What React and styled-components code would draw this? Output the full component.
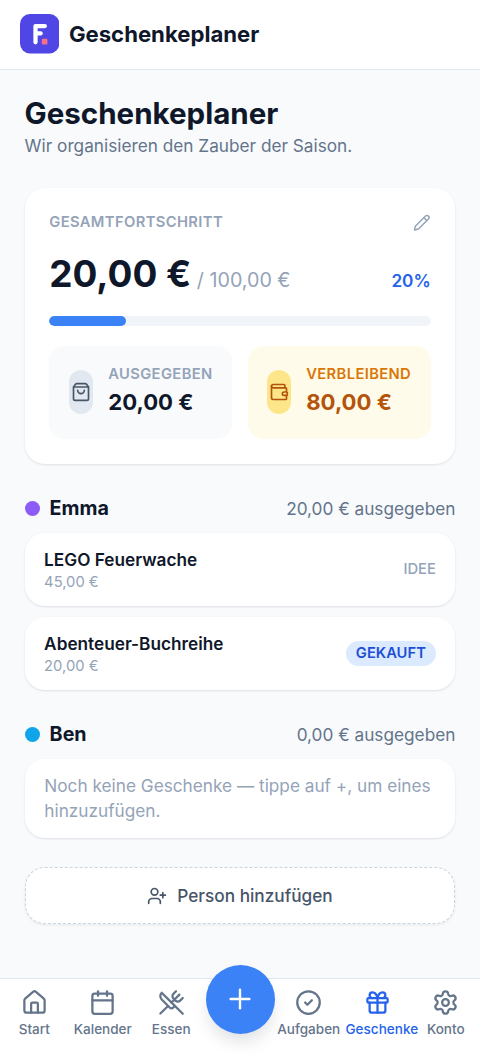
import styled, { createGlobalStyle } from "styled-components";
import {
  Calendar,
  CircleCheck,
  Gift,
  House,
  Pencil,
  Plus,
  Settings,
  ShoppingBag,
  UserPlus,
  UtensilsCrossed,
  Wallet,
} from "lucide-react";

const people = [
  {
    name: "Emma",
    color: "#8b5cf6",
    spent: "20,00 €",
    gifts: [
      { title: "LEGO Feuerwache", price: "45,00 €", status: "Idee", bought: false },
      { title: "Abenteuer-Buchreihe", price: "20,00 €", status: "Gekauft", bought: true },
    ],
  },
  { name: "Ben", color: "#0ea5e9", spent: "0,00 €", gifts: [] },
];

const Logo = () => (
  <LogoSvg viewBox="0 0 32 32">
    <rect width="32" height="32" rx="8" fill="#4f46e5" />
    <path d="M12.6 23V9.8H20.2M12.6 15.8H16.8" fill="none" stroke="#fff" strokeWidth="3.5" strokeLinecap="round" strokeLinejoin="round" />
    <rect x="17.7" y="20.2" width="4.6" height="4.6" rx="0.9" fill="#f6708a" />
  </LogoSvg>
);

const NavLink = ({ icon: Icon, label, active }) => (
  <NavItem $active={active}>
    <Icon strokeWidth={2} />
    <NavLabel>{label}</NavLabel>
  </NavItem>
);

const App = () => {
  const percent = 20;

  return (
    <>
      <GlobalStyle />
      <Page>
        <Header>
          <Logo />
          <HeaderTitle>Geschenkeplaner</HeaderTitle>
        </Header>
        <Main>
          <Title>Geschenkeplaner</Title>
          <Subtitle>Wir organisieren den Zauber der Saison.</Subtitle>

          <Summary>
            <Row>
              <Label>Gesamtfortschritt</Label>
              <EditButton aria-label="Budget bearbeiten">
                <Pencil strokeWidth={2} />
              </EditButton>
            </Row>
            <Amounts>
              <div>
                <Total>20,00 €</Total>
                <Budget> / 100,00 €</Budget>
              </div>
              <Percent>{percent}%</Percent>
            </Amounts>
            <Track>
              <Fill style={{ width: `${percent}%` }} />
            </Track>
            <Stats>
              <Stat>
                <StatIcon>
                  <ShoppingBag strokeWidth={2} />
                </StatIcon>
                <div>
                  <StatLabel>Ausgegeben</StatLabel>
                  <StatValue>20,00 €</StatValue>
                </div>
              </Stat>
              <Stat $warm>
                <StatIcon $warm>
                  <Wallet strokeWidth={2} />
                </StatIcon>
                <div>
                  <StatLabel $warm>Verbleibend</StatLabel>
                  <StatValue $warm>80,00 €</StatValue>
                </div>
              </Stat>
            </Stats>
          </Summary>

          {people.map((person) => (
            <Person key={person.name}>
              <PersonHeader>
                <PersonName $color={person.color}>{person.name}</PersonName>
                <Spent>{person.spent} ausgegeben</Spent>
              </PersonHeader>
              {person.gifts.length > 0 ? (
                person.gifts.map((gift) => (
                  <GiftCard key={gift.title}>
                    <div>
                      <GiftTitle>{gift.title}</GiftTitle>
                      <GiftPrice>{gift.price}</GiftPrice>
                    </div>
                    <Status $bought={gift.bought}>{gift.status}</Status>
                  </GiftCard>
                ))
              ) : (
                <Empty>Noch keine Geschenke — tippe auf +, um eines hinzuzufügen.</Empty>
              )}
            </Person>
          ))}

          <AddPerson>
            <UserPlus strokeWidth={2} />
            Person hinzufügen
          </AddPerson>
        </Main>
        <Nav>
          <NavLink icon={House} label="Start" />
          <NavLink icon={Calendar} label="Kalender" />
          <NavLink icon={UtensilsCrossed} label="Essen" />
          <AddButton aria-label="Hinzufügen">
            <Plus strokeWidth={1.8} />
          </AddButton>
          <NavLink icon={CircleCheck} label="Aufgaben" />
          <NavLink icon={Gift} label="Geschenke" active />
          <NavLink icon={Settings} label="Konto" />
        </Nav>
      </Page>
    </>
  );
};

const GlobalStyle = createGlobalStyle`
  * {
    box-sizing: border-box;
  }
  html {
    font-size: 19.692px;
  }
  body {
    margin: 0;
    background: #f8fafc;
    color: #0f172a;
    font-family: Inter, "Liberation Sans", sans-serif;
  }
  h1, h2, p {
    margin: 0;
  }
  button {
    font-family: inherit;
    border: none;
    padding: 0;
    background: none;
  }
  svg {
    display: block;
    flex-shrink: 0;
  }
`;

const Page = styled.div`
  display: flex;
  flex-direction: column;
  height: 100vh;
  overflow: hidden;
`;

const Header = styled.header`
  display: flex;
  align-items: center;
  gap: 0.5rem;
  height: 69.5px;
  flex-shrink: 0;
  padding: 0 1rem 0.5px;
  background: #fff;
  border-bottom: 1px solid #e2e8f0;
`;

const LogoSvg = styled.svg`
  width: 2rem;
  height: 2rem;
`;

const HeaderTitle = styled.div`
  font-size: 1.125rem;
  line-height: 1.75rem;
  font-weight: 700;
`;

const Main = styled.main`
  flex: 1;
  min-height: 0;
  padding: 1.25rem 1.25rem 0;
`;

const Title = styled.h1`
  font-size: 1.5rem;
  line-height: 2rem;
  font-weight: 700;
`;

const Subtitle = styled.p`
  font-size: 0.875rem;
  line-height: 1.25rem;
  color: #64748b;
`;

const Summary = styled.section`
  margin-top: 30px;
  height: 276px;
  padding: 1.25rem;
  background: #fff;
  border-radius: 1rem;
  box-shadow: 0 1px 3px rgba(15, 23, 42, 0.07), 0 1px 2px rgba(15, 23, 42, 0.04);
`;

const Row = styled.div`
  display: flex;
  align-items: center;
  justify-content: space-between;
  height: 19.5px;
`;

const Label = styled.span`
  font-size: 0.75rem;
  font-weight: 600;
  letter-spacing: 0.025em;
  text-transform: uppercase;
  color: #94a3b8;
`;

const EditButton = styled.button`
  color: #94a3b8;

  svg {
    width: 17.5px;
    height: 17.5px;
  }
`;

const Amounts = styled.div`
  display: flex;
  align-items: baseline;
  justify-content: space-between;
  margin-top: 20px;
  line-height: 44px;
`;

const Total = styled.span`
  font-size: 1.875rem;
  font-weight: 700;
`;

const Budget = styled.span`
  font-size: 1rem;
  color: #94a3b8;
`;

const Percent = styled.span`
  font-size: 0.875rem;
  font-weight: 600;
  color: #2563eb;
`;

const Track = styled.div`
  height: 10px;
  margin-top: 12.5px;
  border-radius: 5px;
  background: #f1f5f9;
  overflow: hidden;
`;

const Fill = styled.div`
  height: 100%;
  border-radius: 5px;
  background: #3b82f6;
`;

const Stats = styled.div`
  display: grid;
  grid-template-columns: 1fr 1fr;
  gap: 16px;
  margin-top: 20px;
`;

const Stat = styled.div`
  display: flex;
  align-items: center;
  gap: 15px;
  height: 93px;
  padding: 0 ${(props) => (props.$warm ? "18.6px" : "19.4px")};
  border-radius: 15px;
  background: ${(props) => (props.$warm ? "#fffbeb" : "#f8fafc")};
`;

const StatIcon = styled.div`
  display: flex;
  align-items: center;
  justify-content: center;
  width: 24.6px;
  height: 44px;
  flex-shrink: 0;
  border-radius: 13px;
  color: ${(props) => (props.$warm ? "#b45309" : "#475569")};
  background: ${(props) => (props.$warm ? "#fde68a" : "#e2e8f0")};

  svg {
    width: 20px;
    height: 20px;
  }
`;

const StatLabel = styled.div`
  font-size: 0.75rem;
  line-height: 1rem;
  font-weight: 600;
  letter-spacing: 0.025em;
  text-transform: uppercase;
  color: ${(props) => (props.$warm ? "#d97706" : "#94a3b8")};
`;

const StatValue = styled.div`
  font-size: 1.125rem;
  line-height: 1.75rem;
  font-weight: 700;
  color: ${(props) => (props.$warm ? "#b45309" : "#0f172a")};
`;

const Person = styled.section`
  margin-top: 30px;
`;

const PersonHeader = styled.div`
  display: flex;
  align-items: center;
  justify-content: space-between;
  height: 28px;
  margin-bottom: 11px;
`;

const PersonName = styled.h2`
  display: flex;
  align-items: center;
  gap: 10px;
  font-size: 1rem;
  font-weight: 700;

  &::before {
    content: "";
    width: 15px;
    height: 15px;
    border-radius: 50%;
    background: ${(props) => props.$color};
  }
`;

const Spent = styled.span`
  font-size: 0.875rem;
  color: #64748b;
`;

const Card = styled.div`
  background: #fff;
  border-radius: 1rem;
  box-shadow: 0 1px 3px rgba(15, 23, 42, 0.07), 0 1px 2px rgba(15, 23, 42, 0.04);
`;

const GiftCard = styled(Card)`
  display: flex;
  align-items: center;
  justify-content: space-between;
  height: 73px;
  padding: 0 19.5px;

  & + & {
    margin-top: 11px;
  }
`;

const GiftTitle = styled.div`
  font-size: 0.875rem;
  line-height: 1.3rem;
  font-weight: 600;
`;

const GiftPrice = styled.div`
  font-size: 0.75rem;
  line-height: 1rem;
  color: #94a3b8;
`;

const Status = styled.span`
  font-size: 0.75rem;
  line-height: 1rem;
  text-transform: uppercase;
  font-weight: ${(props) => (props.$bought ? 600 : 500)};
  color: ${(props) => (props.$bought ? "#1d4ed8" : "#94a3b8")};
  background: ${(props) => (props.$bought ? "#dbeafe" : "none")};
  padding: ${(props) => (props.$bought ? "2.5px 10px" : "0")};
  border-radius: 13px;
`;

const Empty = styled(Card)`
  padding: 15px 19.7px;
  font-size: 0.875rem;
  line-height: 1.25rem;
  color: #94a3b8;
`;

const AddPerson = styled.button`
  display: flex;
  align-items: center;
  justify-content: center;
  gap: 10px;
  width: 100%;
  height: 57px;
  margin-top: 29px;
  font-size: 0.875rem;
  font-weight: 500;
  color: #475569;
  background: #fff;
  border: 1.2px dashed #cbd5e1;
  border-radius: 1rem;
  box-shadow: 0 1px 3px rgba(15, 23, 42, 0.08);

  svg {
    width: 20px;
    height: 20px;
  }
`;

const Nav = styled.nav`
  display: flex;
  justify-content: space-between;
  height: 80px;
  flex-shrink: 0;
  background: #fff;
  border-top: 1px solid #e2e8f0;
`;

const NavItem = styled.a`
  display: flex;
  flex-direction: column;
  align-items: center;
  flex: 1 0 0;
  min-width: 0;
  gap: 2.5px;
  padding: 10px 2.5px 0;
  color: ${(props) => (props.$active ? "#2563eb" : "#64748b")};

  svg {
    width: 27px;
    height: 27px;
  }
`;

// long labels keep their left edge and run over on the right
const NavLabel = styled.span`
  max-width: 100%;
  font-size: 13.54px;
  line-height: 20px;
  font-weight: 500;
  white-space: nowrap;
`;

const AddButton = styled.button`
  display: flex;
  align-items: center;
  justify-content: center;
  width: 69px;
  height: 69px;
  margin-top: -14.5px;
  flex-shrink: 0;
  color: #fff;
  background: #3b82f6;
  border-radius: 50%;
  box-shadow: 0 10px 18px -4px rgba(15, 23, 42, 0.15);

  svg {
    width: 32px;
    height: 32px;
  }
`;

export default App;
